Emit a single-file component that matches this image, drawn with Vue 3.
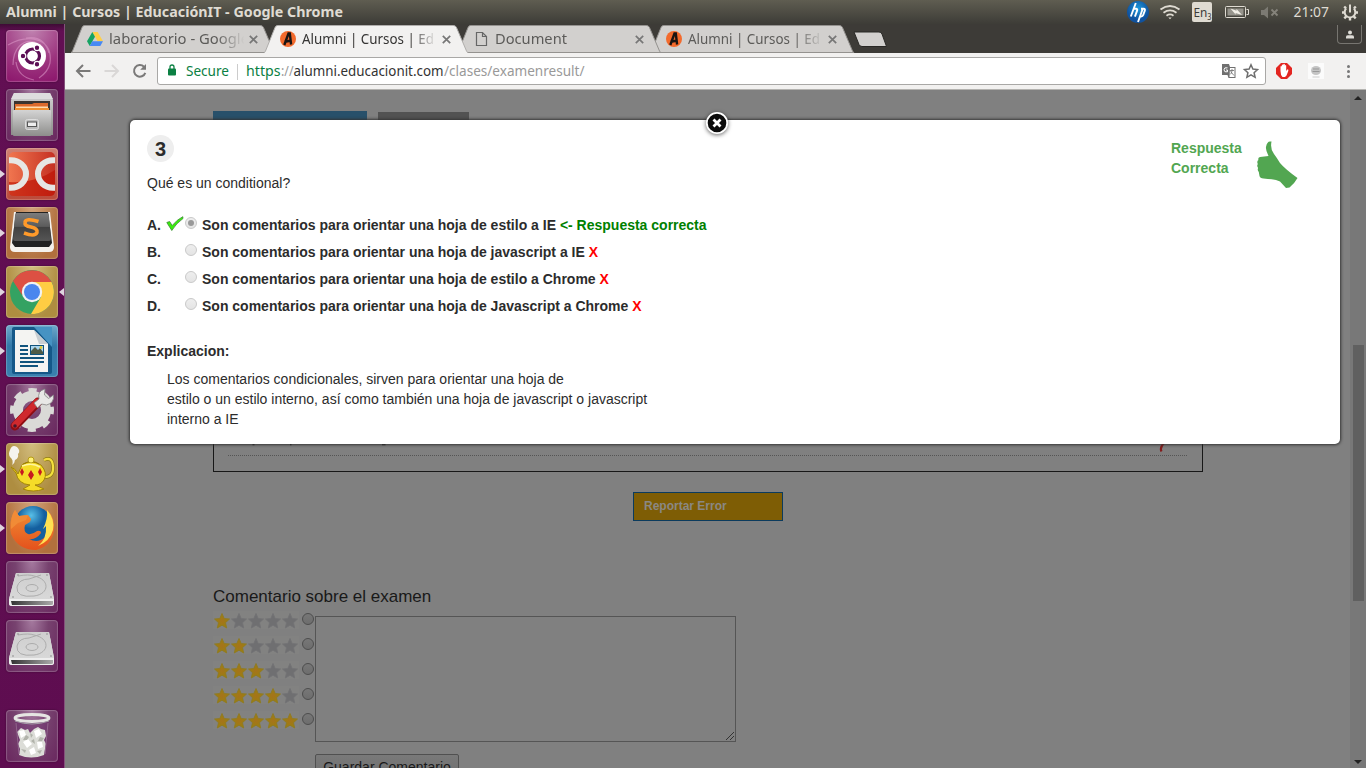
<script setup>
const launcher = [
  { id: 'dash', tone: 'magenta' },
  { id: 'files', tone: 'glass' },
  { id: 'dc', tone: 'red', running: true },
  { id: 'sublime', tone: 'brown', running: true },
  { id: 'chrome', tone: 'gold', running: true, focused: true },
  { id: 'writer', tone: 'blue', running: true },
  { id: 'settings', tone: 'glass' },
  { id: 'teapot', tone: 'gold', running: true },
  { id: 'firefox', tone: 'brown', running: true },
  { id: 'disk', tone: 'glass' },
  { id: 'disk', tone: 'glass' },
  { id: 'trash', tone: 'glass', last: true }
]
const tabs = [
  { icon: 'drive', title: 'laboratorio - Google', len: 140, z: 4 },
  { icon: 'alumni', title: 'Alumni | Cursos | Ed', len: 132, z: 5, active: true },
  { icon: 'page', title: 'Document', len: 72, z: 3 },
  { icon: 'alumni', title: 'Alumni | Cursos | Ed', len: 132, z: 2 }
]
const answers = [
  { k: 'A.', t: 'Son comentarios para orientar una hoja de estilo a IE', ok: true },
  { k: 'B.', t: 'Son comentarios para orientar una hoja de javascript a IE' },
  { k: 'C.', t: 'Son comentarios para orientar una hoja de estilo a Chrome' },
  { k: 'D.', t: 'Son comentarios para orientar una hoja de Javascript a Chrome' }
]
</script>

<template>
  <div class="desktop">
    <header class="menubar">
      <svg class="title" width="345" height="24"><text x="6" y="17" textLength="337" lengthAdjust="spacingAndGlyphs">Alumni | Cursos | EducaciónIT - Google Chrome</text></svg>
      <svg class="indicators" width="246" height="24" viewBox="1120 0 246 24">
        <defs><radialGradient id="hpg" cx=".5" cy=".35"><stop offset="0" stop-color="#1d9ade" /><stop offset="1" stop-color="#10529e" /></radialGradient></defs>
        <circle cx="1138" cy="12" r="11" fill="url(#hpg)" />
        <g fill="none" stroke="#fff" stroke-width="1.900"><path d="M1135.800 3l-5 13.500M1133.500 8.800h2.500q1.700 0 1.100 1.900l-2.200 6M1143 8l-5 14M1141 8.800h2.700q1.700 0 1.100 1.900l-1.600 4.300q-.5 1.500-2.200 1.500h-1.700" /></g>
        <g fill="none" stroke="#dfdbd2" stroke-width="1.800"><path d="M1160.500 9.500q9.500-7 19 0M1163.500 12.700q6.500-4.600 13 0M1166.500 15.700q3.500-2.500 7 0" /><path d="M1168.300 17.500h3.400l-1.700 1.800z" fill="#dfdbd2" stroke="none" /></g>
        <rect x="1192" y="2" width="20" height="20" rx="2" fill="#dfdbd2" />
        <text x="1193.500" y="17" font-size="13" fill="#3c3b37" textLength="18" lengthAdjust="spacingAndGlyphs">En<tspan font-size="8" dy="2.500">3</tspan></text>
        <rect x="1225.500" y="6.500" width="20" height="11" rx="1" fill="none" stroke="#dfdbd2" /><path d="M1246.500 9.500h2v5h-2" fill="none" stroke="#dfdbd2" /><rect x="1227.500" y="8.500" width="16" height="7" fill="#96948c" />
        <path d="M1230.500 8.500l6 2.300v-1.800l5.500 6-6.500-1.900.3 1.600z" fill="#f1eee6" />
        <path d="M1261 10h3l4-3.500v12l-4-3.500h-3z" fill="#7c7a73" /><path d="M1271.500 9.500l6 6m0-6l-6 6" stroke="#85837b" stroke-width="1.800" />
        <text x="1293.500" y="17" font-size="14.500" textLength="35.500" lengthAdjust="spacingAndGlyphs" fill="#dfdbd2">21:07</text>
        <g fill="none" stroke="#dfdbd2"><path d="M1346.200 8.400a5.300 5.300 0 1 0 7.600 0" stroke-width="2" /><path d="M1350 4.500v8" stroke-width="2" /><path d="M1342 12.500h3M1355 12.500h3M1350 18v2.500M1344.200 6.500l1.800 1.800M1355.800 6.500l-1.800 1.800M1344.300 18.300l2-2M1355.700 18.300l-2-2" stroke-width="2.400" /></g>
      </svg>
    </header>

    <div class="workspace">
      <aside class="launcher">
        <div v-for="(a, i) in launcher" :key="i" class="slot" :class="{ last: a.last }">
          <i v-if="a.running" class="arrow" /><i v-if="a.focused" class="arrow right" />
          <div class="tile" :class="a.tone">
            <svg v-if="a.id === 'dash'" viewBox="0 0 52 52">
              <g fill="none" stroke="#df9bcb" stroke-width="1.200" opacity=".55"><path d="M2 15C25 2 47 10 44 33q-2 9-11 15M7 35C7 18 17 9 29 12M10 32q2 15 18 18M20 8q18-3 23 15" /></g>
              <circle cx="26" cy="26" r="14" fill="#fff" /><circle cx="26.500" cy="26" r="7" fill="none" stroke="#5c0e55" stroke-width="3.200" /><g stroke="#fff" stroke-width="1.200" fill="#5c0e55"><circle cx="17" cy="26" r="2.800" /><circle cx="31" cy="17.800" r="2.800" /><circle cx="31" cy="34.200" r="2.800" /></g>
            </svg>
            <svg v-else-if="a.id === 'files'" viewBox="0 0 52 52">
              <defs><linearGradient id="cab" x2="0" y2="1"><stop stop-color="#d4d4d4" /><stop offset="1" stop-color="#8d8d8b" /></linearGradient></defs>
              <path d="M8 4h36l3 7v35H5V11z" fill="url(#cab)" /><path d="M8 4h36l3 6H5z" fill="#dedede" /><rect x="8" y="12" width="36" height="12" fill="#3a3430" /><path d="M9 15h17l2-1h14v10H9z" fill="#dc6a2c" /><path d="M10 17.500h32v4H10z" fill="#ffdcae" /><path d="M9 19h34v4H9z" fill="#f09030" /><rect x="7" y="21" width="38" height="26" rx="1" fill="url(#cab)" /><rect x="19.500" y="30.500" width="13" height="10" rx="2" fill="#bbb" stroke="#ddd" /><rect x="21.500" y="33" width="9" height="4.500" fill="#eee" stroke="#555" />
            </svg>
            <svg v-else-if="a.id === 'dc'" viewBox="0 0 52 52">
              <defs><linearGradient id="dcg" x2="1"><stop stop-color="#f0754f" /><stop offset="1" stop-color="#c53022" /></linearGradient></defs>
              <rect x="3" y="4" width="46" height="44" rx="5" fill="url(#dcg)" /><path d="M3 34q25 2 46-12v21q0 5-5 5H8q-5 0-5-5z" fill="#bd1303" opacity=".65" /><path d="M3 12.300h2a15 13.700 0 0 1 0 27.400H3M49 12.300h-2a15 13.700 0 0 0 0 27.400h2" fill="none" stroke="#e6e6e4" stroke-width="6" />
            </svg>
            <svg v-else-if="a.id === 'sublime'" viewBox="0 0 52 52">
              <defs><linearGradient id="key" x2="0" y2="1"><stop stop-color="#7c7c7c" /><stop offset=".48" stop-color="#5c5c5c" /><stop offset=".5" stop-color="#404040" /><stop offset="1" stop-color="#555" /></linearGradient></defs>
              <path d="M8 5h36l4 35q0 5-5 5H9q-5 0-5-5z" fill="#f5f2ed" /><path d="M10 5h32l4 31-3 4H9l-3-4z" fill="#222" /><path d="M11 6h30q2 0 2 3l2 23q0 2-2 2H9q-2 0-2-2l2-23q0-3 2-3z" fill="url(#key)" /><path d="M32.500 14.500q-13-4-13.500 1-.5 3.500 6 4.500 7 1.500 6 5.500-2 4.500-13 .5" fill="none" stroke="#ff9a2a" stroke-width="3.600" />
            </svg>
            <svg v-else-if="a.id === 'chrome'" viewBox="0 0 52 52">
              <circle cx="26" cy="26" r="22" fill="#34a262" /><path d="M26 16h19.500A22 22 0 0 1 25 48L35 31z" fill="#ffcd43" /><path d="M7 15A22 22 0 0 1 45.500 16H26Q16 18 16 29z" fill="#dc5043" /><circle cx="26" cy="26" r="10.200" fill="#f2f2f2" /><circle cx="26" cy="26" r="8" fill="#4a86ee" />
            </svg>
            <svg v-else-if="a.id === 'writer'" viewBox="0 0 52 52">
              <rect x="6" y="2" width="40" height="47" rx="2" fill="#155888" /><path d="M28 2h18v20z" fill="#4693c3" /><path d="M9 5h19l14 14v28H9z" fill="#f4f4f2" /><path d="M28 5l14 14H33z" fill="#c8ced2" /><g stroke="#11547d" stroke-width="2"><path d="M14 21h8M14 25h8M14 29h8M14 33h24M14 37h24M14 41h18" /></g><rect x="24.500" y="20.500" width="13" height="9" fill="#aad6ef" stroke="#11547d" /><path d="M25 29v-3l4-4 3 3 2-2 3 4v2z" fill="#4e5b47" /><circle cx="35" cy="22.500" r="1.400" fill="#e4c934" />
            </svg>
            <svg v-else-if="a.id === 'settings'" viewBox="0 0 52 52">
              <circle cx="26" cy="26" r="14" fill="none" stroke="#dadad7" stroke-width="10" /><circle cx="26" cy="26" r="19.500" fill="none" stroke="#dadad7" stroke-width="5" stroke-dasharray="8 7.315" stroke-dashoffset="4" /><path d="M9 42L32 18" stroke="#8e0d13" stroke-width="9" stroke-linecap="round" /><path d="M9 41L31 18" stroke="#cf292d" stroke-width="6.500" stroke-linecap="round" /><path d="M28 19l5-4q-2-8 6-10l-.5 6 4 3.500 5-3.500q1 8-7 10l-5-1-4 4z" fill="#e8e8e6" stroke="#858585" stroke-width=".8" /><circle cx="9" cy="42" r="1.800" fill="#45172b" />
            </svg>
            <svg v-else-if="a.id === 'teapot'" viewBox="0 0 52 52">
              <path d="M6 22q2-5-2-8-2-3 0-7 2-6 7-3 4 4 1 7 1 4-3 6 0 3-3 5" fill="#f5f3ee" /><path d="M37 34q11 1 10-11-1-10-9-6" fill="none" stroke="#8d7a12" stroke-width="3.600" /><path d="M37 34q11 1 10-11-1-10-9-6" fill="none" stroke="#f4df3d" stroke-width="2.200" /><path d="M5 24q4 1 7 7l4-9q9-6 19 0 7 8 3 15-3 5-9 5l9 4q-11 4-21 0l7-4q-12-1-14-12z" fill="#f5dc28" stroke="#a38606" /><path d="M17 21q9-5 16 0" stroke="#9b7e00" fill="none" /><circle cx="25" cy="17" r="3" fill="#fff176" stroke="#b69c15" /><path d="M16 25l2 4-2 4-2-4zM25 27l3 5-3 5-3-5zM34 25l2 4-2 4-2-4z" fill="#c71920" /><path d="M16 23q10-4 18 1" stroke="#fff69d" stroke-width="1.500" fill="none" />
            </svg>
            <svg v-else-if="a.id === 'firefox'" viewBox="0 0 52 52">
              <defs><radialGradient id="ffb" cx=".45" cy=".25"><stop stop-color="#58c0e8" /><stop offset=".7" stop-color="#145f9f" /></radialGradient><linearGradient id="ffo" x2="0" y2="1"><stop stop-color="#f08d34" /><stop offset="1" stop-color="#e4511c" /></linearGradient></defs>
              <circle cx="27" cy="23" r="19" fill="url(#ffb)" /><path d="M41 8q8 7 7 20Q46 44 30 48 12 48 5 32 2 20 9 8l4 6 9-1 3 4-1 3-5 3q-2 7 3 9 4 1 9-3 4-1 4 2-5 7-12 6 9 5 16-2 6-5 5-14l-3 3q4-9 0-15z" fill="url(#ffo)" /><path d="M41 8q8 9 6 20-3 11-15 16 9-7 8-20l-3 3q5-10 4-19z" fill="#ffe052" /><path d="M9 8l4 6 9-1-2 5-8 3-7 6q-1-12 4-19z" fill="#f18b36" />
            </svg>
            <svg v-else-if="a.id === 'disk'" viewBox="0 0 52 52">
              <defs><linearGradient id="hdd" x2="0" y2="1"><stop stop-color="#cfcfcf" /><stop offset="1" stop-color="#d8d8d8" /></linearGradient><linearGradient id="hde"><stop stop-color="#333" /><stop offset="1" stop-color="#aaa" /></linearGradient></defs>
              <path d="M3 38l7-26h33l5 26v5q0 2-3 2H6q-3 0-3-2z" fill="#eee" /><path d="M10 12h33l5 26H3z" fill="url(#hdd)" /><path d="M5 40h42v3q0 1-2 1H6z" fill="url(#hde)" /><g fill="none" stroke="#acacac"><path d="M12 15q11-2 16 0c16 3 16 18 0 20Q10 37 11 26q2-8 12-8L35 14" /><ellipse cx="26" cy="27" rx="6" ry="3.500" /></g><g fill="#888"><circle cx="12" cy="14" r=".8" /><circle cx="41" cy="14" r=".8" /><circle cx="7" cy="36" r=".8" /><circle cx="45" cy="36" r=".8" /></g>
            </svg>
            <svg v-else viewBox="0 0 52 52">
              <path d="M9 10l3 34q14 6 28 0l3-34" fill="#70376f" opacity=".6" /><path d="M11 22l4-4 4 2 3-1 2 4 4-4 4-2 3 2 4 1 1 6-2 4 2 4-1 5-1 6q-13 5-25 0l1-6-2-5 2-4z" fill="#dcddd8" /><g fill="#fff"><path d="M13 21l5-1 2 5-5 3zM28 21l5-2 3 5-6 4zM17 32l5-3 4 5-5 4zM31 32l5 0 1 5-5 2zM23 40l5-3 2 6-5 2z" /></g><g fill="#b1b3ab"><path d="M20 25l3 2-2 3-4 0zM34 27l4 1-2 3-4 0zM25 31l3-2 1 5zM15 39l5 1-1 3zM31 41l5-1-2 4zM24 23l3 2-2 3z" /></g><ellipse cx="26" cy="8" rx="17" ry="3.500" fill="none" stroke="#e6e6e3" stroke-width="2.800" /><path d="M9 11q17 6 34 0" fill="none" stroke="#a5a0a7" /><path d="M10 13l3 31M42 13l-3 31" stroke="#91658b" />
            </svg>
          </div>
        </div>
      </aside>

      <main class="browser">
        <div class="tabstrip">
          <div v-for="(t, i) in tabs" :key="i" class="tab" :class="{ active: t.active }" :style="{ zIndex: t.z }">
            <svg class="shape" width="205" height="28" viewBox="0 0 205 28"><path d="M0 28L1.500 26 11 2.500q.8-2 2.500-2h176q2 0 3 2L202.500 26l1.500 2z" /><path class="edge" d="M0 28L1.500 26 11 2.500q.8-2 2.500-2h176q2 0 3 2L202.500 26l1.500 2" /><path v-if="!t.active" class="edge" d="M0 27.500h204" /></svg>
            <svg v-if="t.icon === 'drive'" class="favicon" viewBox="0 0 16 16"><path d="M5.300 1h5.400L16 10.300h-5.400z" fill="#ffcf48" /><path d="M5.300 1L8 5.700 2.700 15 0 10.300z" fill="#15a362" /><path d="M5.300 10.300H16L13.300 15H2.700z" fill="#4688f4" /></svg>
            <svg v-else-if="t.icon === 'alumni'" class="favicon" viewBox="0 0 16 16"><circle cx="8" cy="8" r="8" fill="#f36a2c" /><path d="M4.500 10.800l6-1M4.300 14L8.500 2.500h1.300l1.300 11" fill="none" stroke="#191412" stroke-width="2.400" /></svg>
            <svg v-else class="favicon" viewBox="0 0 16 16"><path d="M3.500 1.500h6l4 4v9h-10zM9.500 1.500v4h4" fill="none" stroke="#666" stroke-width="1.200" /></svg>
            <svg class="label" width="141" height="24"><text x="0" y="16" :textLength="t.len" lengthAdjust="spacingAndGlyphs">{{ t.title }}</text></svg>
            <svg class="close" width="9" height="9" viewBox="0 0 9 9"><path d="M.8.8l7.400 7.400m0-7.400L.8 8.200" /></svg>
          </div>
          <svg class="newtab" width="34" height="17" viewBox="0 0 34 17"><path d="M1 1h25q2 0 3 2l4.500 12.500H9q-2 0-3-2z" fill="#d2d0ce" stroke="#292825" /></svg>
          <div class="profile"><svg width="8" height="9" viewBox="0 0 10 10"><circle cx="5" cy="2.500" r="2.500" fill="#dedcd7" /><path d="M0 10V7.800Q0 6 3 6h4q3 0 3 1.800V10z" fill="#dedcd7" /></svg></div>
        </div>

        <div class="toolbar">
          <svg class="nav" width="75" height="18" viewBox="0 0 75 18"><path d="M16.500 9H3m6-6L3 9l6 6" stroke="#7a7978" /><path d="M30.500 9H44m-6-6l6 6-6 6" stroke="#d9d7d6" /><path d="M70 4.800a5.800 5.800 0 1 0 1.300 6" stroke="#7a7978" /><path d="M72 2v5.800h-5.800z" fill="#7a7978" /></svg>
          <div class="omnibox">
            <svg class="lock" width="8" height="12" viewBox="0 0 8 12"><rect y="4.500" width="8" height="7" rx="1" fill="#0b8043" /><path d="M2 5V3q0-2 2-2t2 2v2" fill="none" stroke="#0b8043" stroke-width="1.300" /></svg>
            <svg class="url" width="420" height="26"><g fill="#0b8043"><text x="8" y="18" textLength="43" lengthAdjust="spacingAndGlyphs">Secure</text><text x="68" y="18" textLength="34.500" lengthAdjust="spacingAndGlyphs">https</text></g><path d="M59.500 6v16" stroke="#ccc" /><text x="103" y="18" fill="#999" textLength="12.500" lengthAdjust="spacingAndGlyphs">://</text><text x="115.500" y="18" fill="#333" textLength="150" lengthAdjust="spacingAndGlyphs">alumni.educacionit.com</text><text x="266" y="18" fill="#999" textLength="140.500" lengthAdjust="spacingAndGlyphs">/clases/examenresult/</text></svg>
            <svg class="pageacts" width="38" height="16" viewBox="0 0 38 16"><path d="M1 1h7l1 3h5.500v11H7.500l-1-3H1z" fill="#707070" /><path d="M9 5h4.500v9H8.500z" fill="#fff" /><path d="M6.500 4.800Q3 4 3 6.800t3.500 2V7H5" stroke="#fff" fill="none" /><path d="M8.500 7.500h4.500M11 6v1.500q0 3-2 4M9.500 8.500l3.500 4" stroke="#777" fill="none" stroke-width=".9" /><path d="M30 1.800l1.900 4.300 4.600.5-3.400 3.100 1 4.600-4.100-2.400-4.100 2.400 1-4.600-3.400-3.100 4.600-.5z" fill="none" stroke="#6e6e6e" stroke-width="1.500" /></svg>
          </div>
          <svg class="exts" width="94" height="18" viewBox="1270 62 94 18"><path d="M1281 63h6l5 5v6l-5 5h-6l-5-5v-6z" fill="#e32520" /><path d="M1280.500 71v-4.500q.7-.8 1.300 0V65q.8-.8 1.500 0v-.8q.8-.8 1.500 0v1.300q.8-.8 1.400 0V71l1.300-1.800q1.300.2.800 1.800l-1.800 4.500-1.500 1.500h-2.500q-2-2-2-6z" fill="#fff" /><rect x="1308" y="63" width="16" height="16" fill="#fbfbfb" /><ellipse cx="1316" cy="70.500" rx="5" ry="4.500" fill="#c4c4c4" /><path d="M1312.500 77h7" stroke="#ddd" stroke-width="1.500" /><path d="M1313 69h6M1312.500 71.500h7" stroke="#999" /><g fill="#777"><circle cx="1348.500" cy="66.500" r="1.500" /><circle cx="1348.500" cy="71.500" r="1.500" /><circle cx="1348.500" cy="76.500" r="1.500" /></g></svg>
        </div>

        <div class="viewport">
          <section class="page">
            <div class="sectiontabs"><i class="blue" /><i class="gray" /></div>
            <div class="results">
              <div class="result"><svg width="940" height="12" viewBox="0 0 940 12"><path d="M24.500 1.500h2M62 1.500h1.500M154 1.500h3.500" stroke="#252525" stroke-width="1.500" /><path d="M936 0q-4.500 4.500-2.500 8.500" fill="none" stroke="#831a1a" stroke-width="2.200" /></svg></div>
            </div>
            <button class="report">Reportar Error</button>
            <h2>Comentario sobre el examen</h2>
            <div class="feedback">
              <div class="ratings">
                <div v-for="n in 5" :key="n" class="rating">
                  <svg width="86" height="18" viewBox="0 0 86 18"><defs><radialGradient id="gold"><stop stop-color="#a5731b" /><stop offset="1" stop-color="#9a8010" /></radialGradient></defs><rect width="86" height="18" fill="#828281" /><path v-for="s in 5" :key="s" :transform="`translate(${(s - 1) * 17} 1)`" d="M9 1.500l2.200 5 5.300.5-4 3.700 1.200 5.300L9 13.200 4.300 16l1.200-5.300-4-3.700 5.300-.5z" :fill="s <= n ? 'url(#gold)' : '#6f6f71'" :stroke="s <= n ? '#8f7a22' : '#737375'" stroke-width=".9" stroke-linejoin="round" /></svg>
                  <i class="dot" />
                </div>
              </div>
              <div class="comment"><div class="textarea"><svg width="8" height="8" viewBox="0 0 8 8"><path d="M0 8l8-8M4 8l4-4" stroke="#333" /></svg></div><button class="save">Guardar Comentario</button></div>
            </div>
          </section>
          <div class="scrollbar"><i class="up" /><i class="thumb" /><i class="down" /></div>

          <section class="modal">
            <svg class="dismiss" width="32" height="32" viewBox="0 0 32 32"><circle cx="16" cy="15" r="10.200" fill="#0b0b0b" stroke="#fff" stroke-width="1.800" /><path d="M12.500 11.500l7 7m0-7l-7 7" stroke="#fff" stroke-width="2.800" /></svg>
            <div class="verdict"><strong>Respuesta<br />Correcta</strong><svg width="42" height="50" viewBox="0 0 42 50"><path d="M13 1.500q-3 0-4 5.500-.5 3 2.500 9L3 17Q.5 18 1.500 20q-2 1-.7 4-1.300 2 .3 4-1 2 .7 4l.7 4q.5 2 4 2.500 7 .5 12.500 1.500l4 1.500 6 6.500 3.500-.5q5-4 8-9.500Q28 29 23 23q-3-5-6-9-4-5-2.500-12.500z" fill="#52a651" /></svg></div>
            <b class="number">3</b>
            <p class="question">Qué es un conditional?</p>
            <div class="answers">
              <div v-for="(a, i) in answers" :key="i" class="answer">
                <span class="letter">{{ a.k }}</span>
                <svg class="check" width="18" height="16" viewBox="0 0 18 16"><path v-if="a.ok" d="M.8 6.500l2.800-1L6.200 9.500Q11 3.500 16.800.7L17 2.500Q10 7.500 5.800 14.500z" fill="#39ed0c" stroke="#3c8a35" stroke-width=".8" /></svg>
                <i class="radio" :class="{ on: a.ok }" />
                <span>{{ a.t }} <em :class="{ right: a.ok }">{{ a.ok ? '<- Respuesta correcta' : 'X' }}</em></span>
              </div>
            </div>
            <strong class="explain">Explicacion:</strong>
            <p class="reason">Los comentarios condicionales, sirven para orientar una hoja de<br />estilo o un estilo interno, así como también una hoja de javascript o javascript<br />interno a IE</p>
          </section>
        </div>
      </main>
    </div>
  </div>
</template>

<style>
body { margin: 0; overflow: hidden; }
</style>
<style scoped>
* { box-sizing: border-box; }
svg { display: block; flex: none; }
.desktop { width: 1366px; height: 768px; display: flex; flex-direction: column; overflow: hidden; font-family: "Liberation Sans", Arial, sans-serif; }
.menubar { height: 24px; display: flex; justify-content: space-between; background: linear-gradient(#5f5d51, #3d3c37); font-family: "Noto Sans", sans-serif; }
.title { font-weight: 700; font-size: 14px; fill: #dfdbd2; }
.workspace { display: flex; height: 744px; }
.launcher { width: 65px; padding-top: 6px; display: flex; flex-direction: column; gap: 7px; background: linear-gradient(#3e0b35, #620f53 7px, #5e0d50); border-right: 1px solid #84517b; }
.slot { position: relative; height: 52px; padding-left: 6px; flex: none; }
.slot.last { margin-top: 31px; }
.tile { width: 52px; height: 52px; border-radius: 4px; overflow: hidden; box-shadow: inset 0 0 1px 1px #ffffff38, 0 0 2px #0006; }
.tile svg { width: 52px; height: 52px; }
.magenta { background: radial-gradient(circle at 50% 0, #c082b0, #9c347e 60%, #8b146b); }
.glass { background: radial-gradient(ellipse at 50% 0, #a57a9f, #77426f 45%, #69275e); }
.red { background: linear-gradient(#cf8072, #bb4939); }
.brown { background: radial-gradient(at 50% 0, #d1a37b, #b1703d 75%); }
.gold { background: radial-gradient(at 50% 0, #d2bd7f, #ae8d40 75%); }
.blue { background: linear-gradient(#70a9cb, #3379a9 40%, #397fae); }
.arrow { position: absolute; left: 0; top: 22px; border: 4px solid transparent; border-left: 5px solid #dfd4de; border-right: 0; }
.arrow.right { left: auto; right: 0; border-left: 0; border-right: 5px solid #dfd4de; }
.browser { width: 1301px; display: flex; flex-direction: column; }
.tabstrip { height: 29px; display: flex; padding: 1px 4px 0 6px; background: #3d3b37; position: relative; font-family: "Noto Sans", sans-serif; }
.tab { position: relative; width: 193px; height: 28px; display: flex; padding-left: 16px; flex: none; }
.shape { position: absolute; left: 0; top: 0; fill: #d2d0ce; }
.active .shape { fill: #f2f1f0; }
.shape .edge { fill: none; stroke: #94928f; stroke-width: 1; }
.active .shape .edge { stroke: #b0aeac; }
.favicon { width: 16px; height: 16px; margin-top: 6px; position: relative; }
.label { margin: 3px 0 0 6px; font-size: 14.500px; fill: #5c5b59; position: relative; mask-image: linear-gradient(90deg, #000 76%, transparent 96%); }
.active .label { fill: #353433; }
.close { position: relative; margin: 10px 0 0 -1px; stroke: #777; stroke-width: 1.700; }
.newtab { margin: 6px 0 0 10px; }
.profile { width: 25px; height: 19px; margin-left: auto; border: 1px solid #777570; border-top: 0; border-radius: 0 0 4px 4px; display: flex; align-items: center; justify-content: center; margin-top: 0; }
.toolbar { height: 37px; padding: 4px 2px 4px 9px; background: #f2f1f0; border-bottom: 1px solid #b4b3b0; display: flex; align-items: center; font-family: "Noto Sans", sans-serif; }
.nav { fill: none; stroke-width: 2; margin-bottom: 1px; }
.omnibox { width: 1109px; height: 28px; margin-left: 8px; border: 1px solid #a9a8a6; border-radius: 3px; background: #fff; display: flex; align-items: center; flex: none; }
.lock { margin-left: 10px; margin-bottom: 2px; }
.url { font-size: 14px; margin-left: 2px; }
.pageacts { margin-left: auto; margin-right: 6px; }
.exts { margin-left: 4px; }
.viewport { height: 678px; background: #808080; position: relative; display: flex; overflow: hidden; }
.page { width: 1285px; padding: 21px 147px 0 148px; flex: none; }
.sectiontabs { display: flex; gap: 11px; height: 40px; }
.sectiontabs .blue { width: 154px; background: #28506a; }
.sectiontabs .gray { width: 91px; margin-top: 1px; background: #525252; }
.results { width: 990px; height: 321px; border: 1px solid #171717; padding: 0 15px 15px 14px; display: flex; align-items: flex-end; }
.result { width: 960px; border-bottom: 1px dotted #555; height: 13px; }
.report { display: block; width: 150px; height: 29px; margin: 20px 0 0 420px; padding: 0 0 2px 10px; border: 1px solid #0b3b5e; background: #7e5d05; color: #8a8884; font: bold 12px "Liberation Sans", Arial, sans-serif; text-align: left; }
h2 { margin: 66px 0 0; font-weight: 400; font-size: 17px; line-height: 20px; color: #191919; }
.feedback { display: flex; margin-top: 4px; }
.ratings { width: 102px; }
.rating { display: flex; height: 25px; gap: 3px; }
.dot { width: 12px; height: 12px; margin-top: 2px; border: 1px solid #4d4d4d; border-radius: 50%; background: linear-gradient(#777, #6d6d6d); }
.comment { padding-top: 5px; }
.textarea { width: 421px; height: 126px; border: 1px solid #555; display: flex; align-items: flex-end; justify-content: flex-end; padding: 1px; }
.save { display: block; margin-top: 12px; width: 144px; height: 26px; padding: 0; border: 1px solid #505050; border-radius: 2px; background: linear-gradient(#797979, #6f6f6f); color: #191919; font: 14px "Liberation Sans", Arial, sans-serif; white-space: nowrap; }
.scrollbar { width: 16px; background: #787878; display: flex; flex-direction: column; align-items: center; flex: none; padding: 6px 0 4px; }
.up { border: 4px solid transparent; border-top: 0; border-bottom: 4px solid #222; }
.thumb { width: 11px; height: 256px; margin-top: 245px; background: #606060; }
.down { margin-top: auto; border: 4px solid transparent; border-bottom: 0; border-top: 4px solid #222; }
.modal { position: absolute; left: 65px; top: 30px; width: 1210px; height: 324px; padding: 15px 17px; border-radius: 5px; background: #fff; box-shadow: 0 0 3px 1px #333; color: #2c2c2c; font-size: 14px; line-height: 20px; }
.dismiss { position: absolute; left: 571px; top: -12px; filter: drop-shadow(0 1px 2px #0009); }
.verdict { position: absolute; left: 1041px; top: 18px; display: flex; gap: 15px; color: #52a651; }
.verdict svg { margin-top: 2px; }
.number { display: flex; width: 27px; height: 27px; border-radius: 50%; background: #eee; font-size: 20px; align-items: center; justify-content: center; }
.question { margin: 11px 0 18px; }
.answers { font-weight: 700; }
.answer { height: 27px; padding-top: 4px; display: flex; align-items: flex-start; }
.letter { width: 19px; }
.check { margin-top: 1px; }
.radio { width: 12px; height: 12px; margin: 2px 5px 0 1px; border: 1px solid #c9c9c9; border-radius: 50%; background: linear-gradient(#eee, #e4e4e4); display: grid; place-items: center; }
.radio.on::after { content: ""; width: 6px; height: 6px; border-radius: 50%; background: #999; }
em { font-style: normal; color: #f00; }
em.right { color: #008000; }
.explain { display: block; margin-top: 22px; }
.reason { margin: 8px 0 0 20px; }
</style>
